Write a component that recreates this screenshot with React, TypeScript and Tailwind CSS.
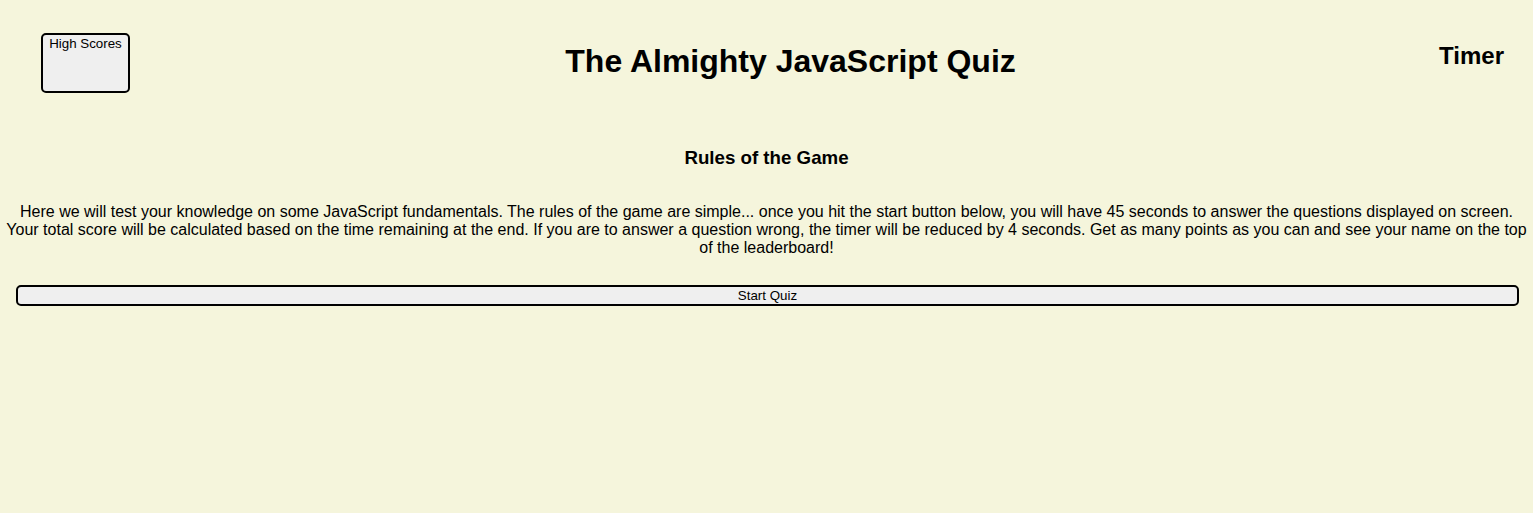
import React from "react";

export default function App() {
  return (
    <div
      className="min-h-[513px] w-full bg-[#f5f5dc] text-black"
      style={{ fontFamily: '"Liberation Sans", Arial, sans-serif' }}
    >
      <header className="flex items-start">
        <button className="ml-[41px] mt-[33px] flex h-[60px] w-[89px] shrink-0 items-start justify-center rounded-[5px] border-2 border-black bg-[#efefef] pt-px text-[13.33px] leading-[15px] text-black">
          High Scores
        </button>
        <div className="flex-1 pl-[12px] text-center">
          <h1 className="mt-[43px] text-[32px] font-bold leading-[37px]">
            The Almighty JavaScript Quiz
          </h1>
        </div>
        <h2 className="mr-[29px] mt-[42px] shrink-0 text-[24px] font-bold leading-[28px]">
          Timer
        </h2>
      </header>
      <h3 className="mt-[54px] text-center text-[18.72px] font-bold leading-[22px]">
        Rules of the Game
      </h3>
      <p className="mt-[34px] px-[6px] text-center text-[16px] leading-[18px]">
        {" "}Here we will test your knowledge on some JavaScript fundamentals. The rules of the game are simple... once you hit the start button below, you will have 45 seconds to answer the questions displayed on screen. Your total score will be calculated based on the time remaining at the end. If you are to answer a question wrong, the timer will be reduced by 4 seconds. Get as many points as you can and see your name on the top of the leaderboard!
      </p>
      <div className="mt-[28px] pl-[16px]">
        <button className="flex h-[21px] w-[1503px] items-center justify-center rounded-[5px] border-2 border-black bg-[#efefef] text-[13.33px] leading-[15px] text-black">
          Start Quiz
        </button>
      </div>
    </div>
  );
}
